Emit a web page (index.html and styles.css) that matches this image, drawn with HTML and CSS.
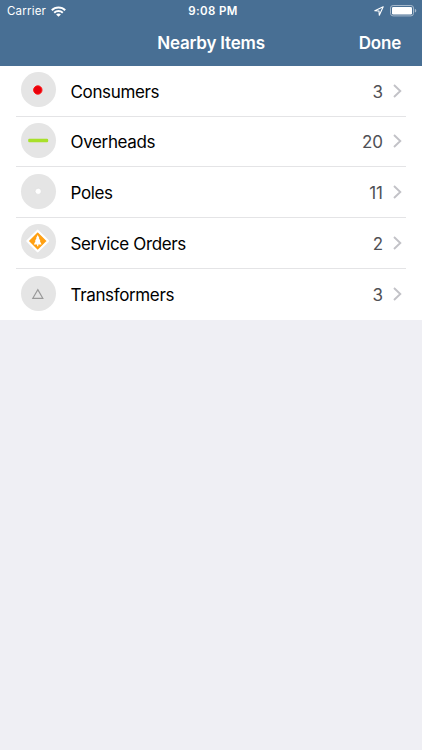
FILE: index.html
```
<!DOCTYPE html>
<html lang="en">
<head>
  <meta charset="UTF-8">
  <title>Nearby Items</title>
  <meta name="viewport" content="width=device-width, initial-scale=1.0">
  <link rel="stylesheet" href="styles.css">
</head>
<body>

  <!-- Header -->
  <header>
    <div class="status-bar">
      <div class="carrier">
        <span>Carrier</span>
        <svg width="15" height="11" viewBox="0 0 15 11" fill="none" stroke="#fff" stroke-width="2">
          <path d="M0.8 4.2C4.4 0.5 10.6 0.5 14.2 4.2"/>
          <path d="M3.2 6.7C5.6 4.5 9.4 4.5 11.8 6.7"/>
          <path d="M7.5 10.7L5.1 8.5C6.4 7.3 8.6 7.3 9.9 8.5Z" fill="#fff" stroke="none"/>
        </svg>
      </div>
      <span class="time">9:08 PM</span>
      <div class="indicators">
        <svg width="10" height="10" viewBox="0 0 10 10" fill="none" stroke="#fff" stroke-width="1.1" stroke-linejoin="round">
          <path d="M9.2 0.8L0.8 4.7L5 5L5.3 9.2Z"/>
        </svg>
        <svg width="27" height="12" viewBox="0 0 27 12">
          <rect x="0.5" y="0.5" width="23" height="10.4" rx="2.6" fill="none" stroke="#a5b8cb"/>
          <rect x="2" y="2" width="20" height="7.4" rx="1.2" fill="#fff"/>
          <path d="M24.8 3.8Q26.3 4.3 26.3 5.7Q26.3 7.1 24.8 7.6Z" fill="#a5b8cb"/>
        </svg>
      </div>
    </div>
    <nav>
      <h1>Nearby Items</h1>
      <a class="done" href="#">Done</a>
    </nav>
  </header>

  <!-- Item types -->
  <ul class="items">
    <li>
      <svg class="icon" viewBox="0 0 35 35">
        <circle cx="16.8" cy="18" r="4.2" fill="#e8000b" stroke="#ff1616"/>
      </svg>
      <span class="name">Consumers</span>
      <span class="count">3</span>
      <svg class="chevron" viewBox="0 0 9 14"><path d="M1 1L7.3 7L1 13"/></svg>
    </li>
    <li>
      <svg class="icon" viewBox="0 0 35 35">
        <rect x="7.2" y="15.7" width="20" height="3.6" rx="1.2" fill="#a8e02a"/>
      </svg>
      <span class="name">Overheads</span>
      <span class="count">20</span>
      <svg class="chevron" viewBox="0 0 9 14"><path d="M1 1L7.3 7L1 13"/></svg>
    </li>
    <li>
      <svg class="icon" viewBox="0 0 35 35">
        <circle cx="17.2" cy="17.3" r="3.1" fill="#fff" stroke="#dadada" stroke-width="0.6"/>
      </svg>
      <span class="name">Poles</span>
      <span class="count">11</span>
      <svg class="chevron" viewBox="0 0 9 14"><path d="M1 1L7.3 7L1 13"/></svg>
    </li>
    <li>
      <svg class="icon" viewBox="0 0 35 35">
        <path d="M16.7 6.7L27 17L16.7 27.3L6.4 17Z" fill="#ffa012" stroke="#fff" stroke-width="2.2" stroke-linejoin="round"/>
        <path d="M16.7 11L18.3 14H17.9L19.4 17H18.9L20.6 20.4H17.3V22.2H16.1V20.4H12.8L14.5 17H14L15.5 14H15.1Z" fill="#fff"/>
      </svg>
      <span class="name">Service Orders</span>
      <span class="count">2</span>
      <svg class="chevron" viewBox="0 0 9 14"><path d="M1 1L7.3 7L1 13"/></svg>
    </li>
    <li>
      <svg class="icon" viewBox="0 0 35 35">
        <path d="M16.8 13.6L21.8 22.3H11.8Z" fill="none" stroke="#9a9a9a" stroke-width="1.2"/>
      </svg>
      <span class="name">Transformers</span>
      <span class="count">3</span>
      <svg class="chevron" viewBox="0 0 9 14"><path d="M1 1L7.3 7L1 13"/></svg>
    </li>
  </ul>

</body>
</html>
```

FILE: styles.css
```
* {
  box-sizing: border-box;
}

body {
  margin: 0;
  font-family: Inter, "Liberation Sans", sans-serif;
  background: #efeff4;
  color: #000;
  min-height: 100vh;
}

header {
  height: 65.8px;
  background: #486f94;
  color: #fff;
}

.status-bar {
  display: grid;
  grid-template-columns: 1fr auto 1fr;
  align-items: center;
  height: 22px;
  padding: 0 5px 0 7px;
  font-size: 11.5px;
}

.carrier {
  display: flex;
  align-items: center;
  gap: 5px;
  letter-spacing: 0.2px;
}

.time {
  padding-left: 2px;
  font-weight: 600;
  letter-spacing: 0.4px;
}

.indicators {
  display: flex;
  justify-content: flex-end;
  align-items: center;
  gap: 6px;
}

nav {
  display: grid;
  grid-template-columns: 1fr auto 1fr;
  align-items: center;
  height: 42px;
  padding: 0 21px;
}

h1 {
  grid-column: 2;
  margin: 0;
  font-size: 17px;
  font-weight: 600;
  letter-spacing: -0.2px;
}

.done {
  justify-self: end;
  color: #fff;
  font-size: 17px;
  font-weight: 600;
  letter-spacing: -0.2px;
  text-decoration: none;
}

.items {
  margin: 0;
  padding: 0 16px;
  list-style: none;
  background: #fff;
}

.items li {
  display: flex;
  align-items: center;
  height: 50.75px;
  padding: 0 4px 2px 4.5px;
  border-bottom: 1px solid #e4e4e6;
}

.items li:last-child {
  border-bottom: none;
}

.icon {
  width: 35px;
  height: 35px;
  margin-right: 15px;
  border-radius: 50%;
  background: #e5e5e5;
}

.name {
  flex: 1;
  padding-top: 4px;
  font-size: 17px;
  letter-spacing: -0.35px;
}

.count {
  margin-right: 10px;
  padding-top: 4px;
  color: #505055;
  font-size: 17px;
}

.chevron {
  width: 9px;
  height: 14px;
  margin-top: 2px;
  fill: none;
  stroke: #c2c2c7;
  stroke-width: 1.9;
}
```
